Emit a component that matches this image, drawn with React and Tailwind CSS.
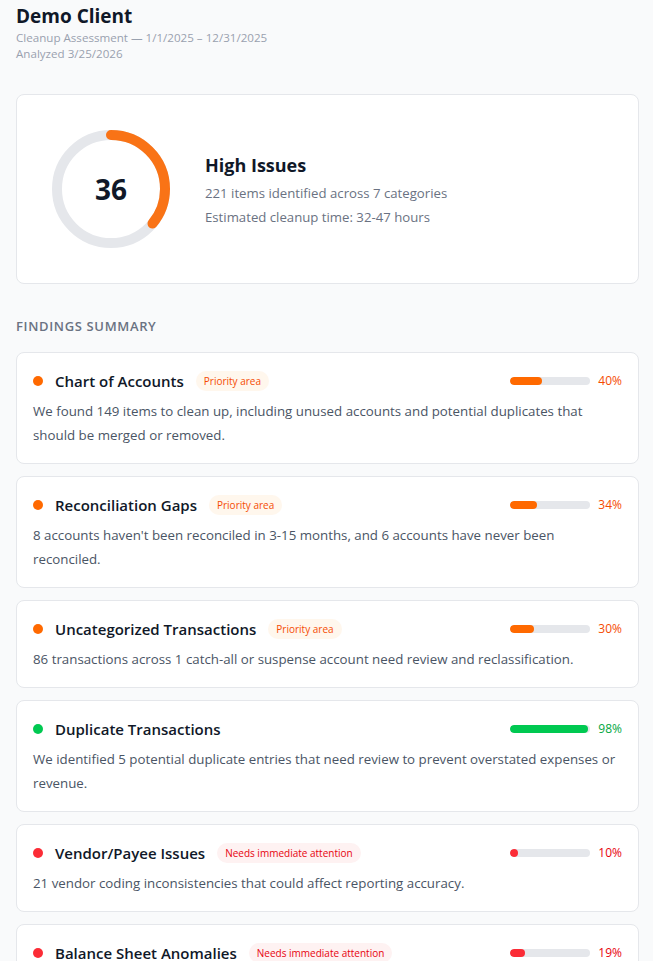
import React from "react";

const findings = [
  {
    title: "Chart of Accounts",
    tone: "orange",
    badge: "Priority area",
    pct: 40,
    text: "We found 149 items to clean up, including unused accounts and potential duplicates that should be merged or removed.",
  },
  {
    title: "Reconciliation Gaps",
    tone: "orange",
    badge: "Priority area",
    pct: 34,
    text: "8 accounts haven't been reconciled in 3-15 months, and 6 accounts have never been reconciled.",
  },
  {
    title: "Uncategorized Transactions",
    tone: "orange",
    badge: "Priority area",
    pct: 30,
    text: "86 transactions across 1 catch-all or suspense account need review and reclassification.",
  },
  {
    title: "Duplicate Transactions",
    tone: "green",
    badge: null,
    pct: 98,
    text: "We identified 5 potential duplicate entries that need review to prevent overstated expenses or revenue.",
  },
  {
    title: "Vendor/Payee Issues",
    tone: "red",
    badge: "Needs immediate attention",
    pct: 10,
    text: "21 vendor coding inconsistencies that could affect reporting accuracy.",
  },
  {
    title: "Balance Sheet Anomalies",
    tone: "red",
    badge: "Needs immediate attention",
    pct: 19,
    text: "4 balance sheet accounts show unusual balances that should be reviewed before closing.",
  },
];

const tones = {
  orange: { dot: "bg-orange-500", text: "text-orange-600", badge: "bg-orange-50 text-orange-600" },
  green: { dot: "bg-green-500", text: "text-green-600", badge: "bg-green-50 text-green-600" },
  red: { dot: "bg-red-500", text: "text-red-600", badge: "bg-red-50 text-red-600" },
};

function Donut({ value }) {
  const r = 54;
  const c = 2 * Math.PI * r;
  return (
    <div className="relative w-[120px] h-[120px] shrink-0">
      <svg width="120" height="120" viewBox="0 0 120 120" className="-rotate-90">
        <circle cx="60" cy="60" r={r} fill="none" stroke="#e5e7eb" strokeWidth="10" />
        <circle
          cx="60"
          cy="60"
          r={r}
          fill="none"
          stroke="#f97316"
          strokeWidth="10"
          strokeLinecap="round"
          strokeDasharray={`${(c * value) / 100} ${c}`}
        />
      </svg>
      <div className="absolute inset-0 flex items-center justify-center text-[28px] font-bold text-gray-900">
        {value}
      </div>
    </div>
  );
}

function FindingCard({ f }) {
  const t = tones[f.tone];
  return (
    <div className="bg-white border border-gray-200 rounded-lg px-4 pt-4 pb-4">
      <div className="flex items-center h-6">
        <span className={`w-2.5 h-2.5 rounded-full ${t.dot}`} />
        <span className="ml-3 text-[15px] font-semibold text-gray-900">{f.title}</span>
        {f.badge && (
          <span className={`ml-3 px-2 h-5 flex items-center rounded-full text-[10px] font-medium ${t.badge}`}>
            {f.badge}
          </span>
        )}
        <div className="ml-auto flex items-center gap-2">
          <div className="w-20 h-2 bg-gray-200 rounded-full overflow-hidden">
            <div className={`h-full rounded-full ${t.dot}`} style={{ width: `${f.pct}%` }} />
          </div>
          <span className={`w-6 text-right text-xs ${t.text}`}>{f.pct}%</span>
        </div>
      </div>
      <p className="mt-1.5 text-[13.3px] leading-6 text-gray-600">{f.text}</p>
    </div>
  );
}

export default function App() {
  return (
    <div className="min-h-screen bg-gray-50 pl-4 pr-[14px] pt-[2px] pb-8 font-['Open_Sans',sans-serif]">
      <h1 className="text-[19px] font-bold text-gray-900 leading-7">Demo Client</h1>
      <p className="text-[11.6px] text-gray-400 leading-4">Cleanup Assessment — 1/1/2025 – 12/31/2025</p>
      <p className="text-[11.6px] text-gray-400 leading-4">Analyzed 3/25/2026</p>

      <div className="mt-8 bg-white border border-gray-200 rounded-lg px-[34px] py-[34px] flex items-center gap-[34px]">
        <Donut value={36} />
        <div className="pt-1">
          <h2 className="text-lg font-bold text-gray-900 leading-6">High Issues</h2>
          <p className="mt-1 text-[13.2px] text-gray-500 leading-6">221 items identified across 7 categories</p>
          <p className="text-[13.2px] text-gray-500 leading-6">Estimated cleanup time: 32-47 hours</p>
        </div>
      </div>

      <h3 className="mt-8 mb-4 text-[13px] leading-5 font-semibold uppercase tracking-wider text-gray-500">
        Findings Summary
      </h3>

      <div className="flex flex-col gap-3">
        {findings.map((f) => (
          <FindingCard key={f.title} f={f} />
        ))}
      </div>
    </div>
  );
}
